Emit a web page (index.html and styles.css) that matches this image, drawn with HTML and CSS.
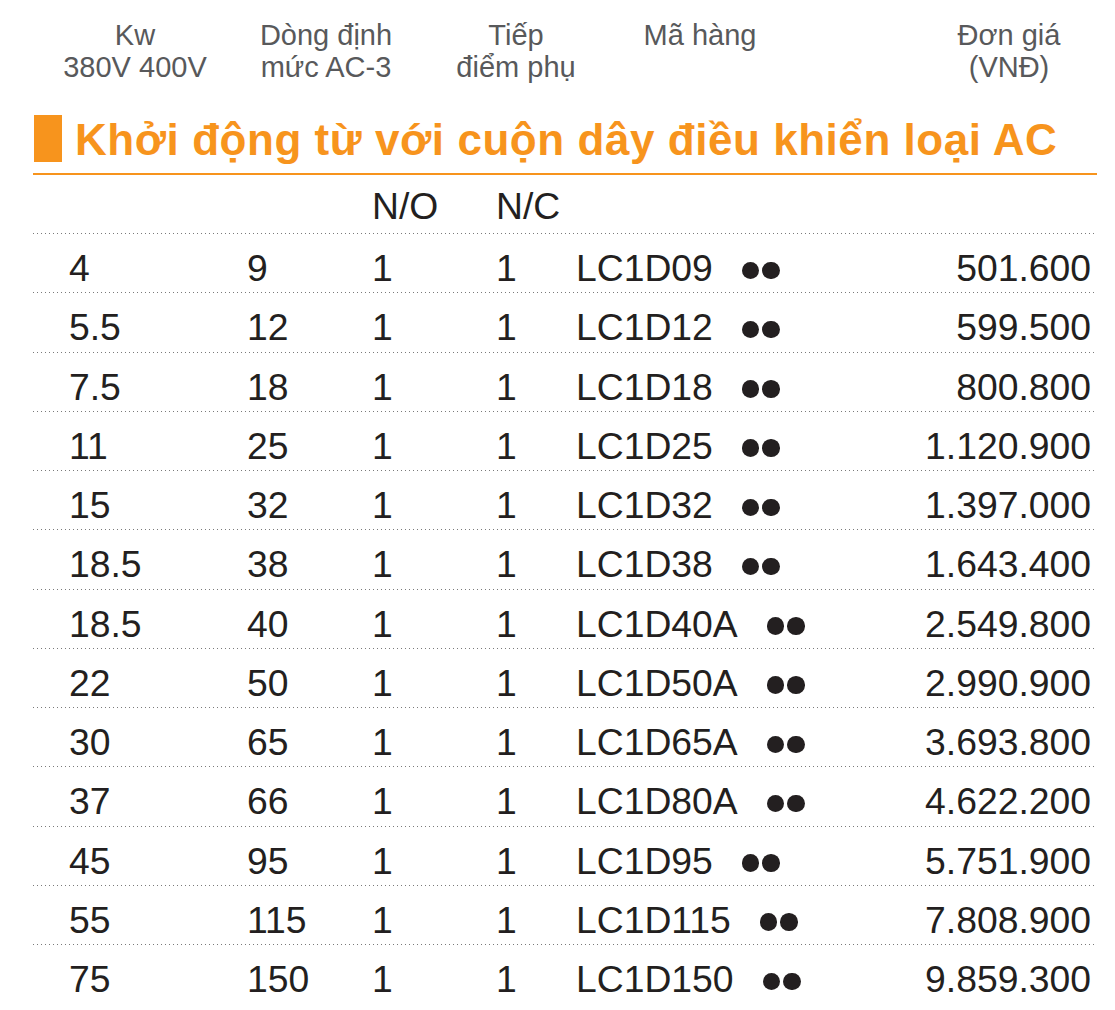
FILE: index.html
```html
<!DOCTYPE html>
<html lang="vi">
<head>
<meta charset="utf-8">
<title>Khởi động từ với cuộn dây điều khiển loại AC</title>
<link rel="stylesheet" href="styles.css">
</head>
<body>
<div class="page">
  <div class="colhead">
    <div class="ch">Kw<br>380V 400V</div>
    <div class="ch">Dòng định<br>mức AC-3</div>
    <div class="ch">Tiếp<br>điểm phụ</div>
    <div class="ch">Mã hàng</div>
    <div class="ch-spacer"></div>
    <div class="ch">Đơn giá<br>(VNĐ)</div>
  </div>

  <div class="title">
    <span class="title-bar"></span>
    <h1 class="title-text">Khởi động từ với cuộn dây điều khiển loại AC</h1>
  </div>

  <div class="subhead">
    <span></span><span></span><span>N/O</span><span>N/C</span><span></span><span></span>
  </div>

  <div class="rows">
    <div class="row"><span>4</span><span>9</span><span>1</span><span>1</span><span class="code">LC1D09<span class="dots"><i></i><i></i></span></span><span class="price">501.600</span></div>
    <div class="row"><span>5.5</span><span>12</span><span>1</span><span>1</span><span class="code">LC1D12<span class="dots"><i></i><i></i></span></span><span class="price">599.500</span></div>
    <div class="row"><span>7.5</span><span>18</span><span>1</span><span>1</span><span class="code">LC1D18<span class="dots"><i></i><i></i></span></span><span class="price">800.800</span></div>
    <div class="row"><span>11</span><span>25</span><span>1</span><span>1</span><span class="code">LC1D25<span class="dots"><i></i><i></i></span></span><span class="price">1.120.900</span></div>
    <div class="row"><span>15</span><span>32</span><span>1</span><span>1</span><span class="code">LC1D32<span class="dots"><i></i><i></i></span></span><span class="price">1.397.000</span></div>
    <div class="row"><span>18.5</span><span>38</span><span>1</span><span>1</span><span class="code">LC1D38<span class="dots"><i></i><i></i></span></span><span class="price">1.643.400</span></div>
    <div class="row"><span>18.5</span><span>40</span><span>1</span><span>1</span><span class="code">LC1D40A<span class="dots"><i></i><i></i></span></span><span class="price">2.549.800</span></div>
    <div class="row"><span>22</span><span>50</span><span>1</span><span>1</span><span class="code">LC1D50A<span class="dots"><i></i><i></i></span></span><span class="price">2.990.900</span></div>
    <div class="row"><span>30</span><span>65</span><span>1</span><span>1</span><span class="code">LC1D65A<span class="dots"><i></i><i></i></span></span><span class="price">3.693.800</span></div>
    <div class="row"><span>37</span><span>66</span><span>1</span><span>1</span><span class="code">LC1D80A<span class="dots"><i></i><i></i></span></span><span class="price">4.622.200</span></div>
    <div class="row"><span>45</span><span>95</span><span>1</span><span>1</span><span class="code">LC1D95<span class="dots"><i></i><i></i></span></span><span class="price">5.751.900</span></div>
    <div class="row"><span>55</span><span>115</span><span>1</span><span>1</span><span class="code">LC1D115<span class="dots"><i></i><i></i></span></span><span class="price">7.808.900</span></div>
    <div class="row"><span>75</span><span>150</span><span>1</span><span>1</span><span class="code">LC1D150<span class="dots"><i></i><i></i></span></span><span class="price">9.859.300</span></div>
  </div>
</div>
</body>
</html>
```

FILE: styles.css
```css
html, body {
  margin: 0;
  padding: 0;
  background: #ffffff;
}

body {
  font-family: "Liberation Sans", Arial, sans-serif;
  color: #231f20;
}

.page {
  width: 1064px;
  margin-left: 33px;
}

/* column header */
.colhead {
  display: grid;
  grid-template-columns: 204px 178px 202px 166px 1fr 176px;
  padding-top: 19px;
  font-size: 29px;
  line-height: 32px;
  color: #58595b;
}

.ch {
  text-align: center;
  white-space: nowrap;
}

/* title */
.title {
  display: flex;
  align-items: flex-start;
  margin-top: 32px;
  padding-bottom: 10px;
  border-bottom: 2px solid #f7941d;
}

.title-bar {
  display: block;
  width: 28px;
  height: 47px;
  margin-left: 1px;
  background: #f7941d;
  flex: none;
}

.title-text {
  margin: 0 0 0 13px;
  padding-top: 1px;
  font-size: 44px;
  line-height: 47px;
  font-weight: bold;
  letter-spacing: 0.55px;
  color: #f7941d;
  white-space: nowrap;
}

/* table grid */
.subhead,
.row {
  display: grid;
  grid-template-columns: 178px 125px 124px 80px 1fr auto;
  padding-left: 36px;
  padding-right: 6px;
  font-size: 37.3px;
  line-height: 42px;
  color: #231f20;
  white-space: nowrap;
}

.subhead {
  height: 58px;
  box-sizing: border-box;
  padding-top: 10px;
}

.row {
  height: 59.25px;
  box-sizing: border-box;
  padding-top: 14px;
  background-image: linear-gradient(to right, #7a7a7a 0, #7a7a7a 1.5px, transparent 1.5px);
  background-size: 4px 1.2px;
  background-repeat: repeat-x;
  background-position: 0 0;
}

.price {
  text-align: right;
}

.dots {
  display: inline-flex;
  gap: 3px;
  margin-left: 29px;
  vertical-align: 2px;
}

.dots i {
  display: block;
  width: 17.5px;
  height: 17.5px;
  border-radius: 50%;
  background: #231f20;
}
```
